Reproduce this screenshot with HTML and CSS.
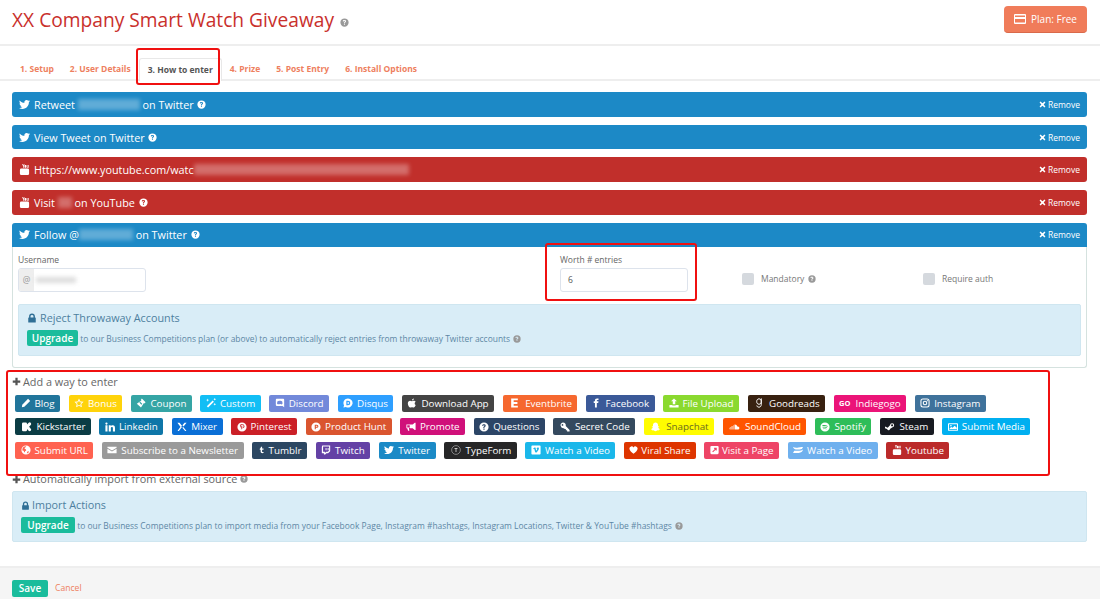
FILE: index.html
```html
<!DOCTYPE html>
<html lang="en">
<head>
    <meta charset="UTF-8">
    <title>XX Company Smart Watch Giveaway</title>
    <link rel="stylesheet" href="styles.css">
</head>
<body>
    <svg class="defs" width="0" height="0">
        <symbol id="i-twitter" viewBox="0 0 24 24"><path d="M23.95 4.57a10 10 0 0 1-2.83.8 4.93 4.93 0 0 0 2.16-2.72c-.95.55-2 .96-3.13 1.2a4.92 4.92 0 0 0-8.38 4.48C7.69 8.09 4.07 6.13 1.64 3.16a4.9 4.9 0 0 0-.67 2.47c0 1.7.87 3.2 2.19 4.1a4.9 4.9 0 0 1-2.23-.61v.06c0 2.38 1.7 4.37 3.95 4.83a5 5 0 0 1-2.21.08 4.94 4.94 0 0 0 4.6 3.42A9.87 9.87 0 0 1 0 19.54a13.94 13.94 0 0 0 7.55 2.21c9.06 0 14-7.5 14-13.98 0-.21 0-.42-.02-.63a10 10 0 0 0 2.46-2.55z"/></symbol>
        <symbol id="i-youtube" viewBox="0 0 24 24"><path d="M7 0h1.6l1 3 1-3h1.6l-1.8 5v3H8.8V5zM13 2h2a1 1 0 0 1 1 1v4a1 1 0 0 1-1 1h-2a1 1 0 0 1-1-1V3a1 1 0 0 1 1-1zM17 2h1.4v5h1.2V2H21v6h-3a1 1 0 0 1-1-1zM5 10h14a3 3 0 0 1 3 3v8a3 3 0 0 1-3 3H5a3 3 0 0 1-3-3v-8a3 3 0 0 1 3-3z"/></symbol>
        <symbol id="i-question" viewBox="0 0 24 24"><path fill-rule="evenodd" d="M12 1a11 11 0 1 1 0 22 11 11 0 0 1 0-22zm-.2 4.2c-2.6 0-4.300 1.300-4.500 3.500l2.800.4c.2-1 .8-1.500 1.600-1.500.9 0 1.500.5 1.500 1.200 0 .7-.5 1.100-1.300 1.700-1 .8-1.600 1.500-1.600 3v.6h2.700v-.4c0-.7.3-1 1.100-1.600 1.100-.8 2-1.700 2-3.400 0-2.300-1.900-3.500-4.300-3.500zM10.500 15.500v2.800h2.900v-2.800z"/></symbol>
        <symbol id="i-times" viewBox="0 0 24 24"><path d="M5 2l7 6 7-6 3 3-6 7 6 7-3 3-7-6-7 6-3-3 6-7-6-7z"/></symbol>
        <symbol id="i-card" viewBox="0 0 24 20"><path fill-rule="evenodd" d="M2 0h20a2 2 0 0 1 2 2v16a2 2 0 0 1-2 2H2a2 2 0 0 1-2-2V2a2 2 0 0 1 2-2zm0 3v3h20V3zm0 7v7h20v-7z"/></symbol>
        <symbol id="i-lock" viewBox="0 0 24 24"><path fill-rule="evenodd" d="M12 1a7 7 0 0 1 7 7v3h1a1 1 0 0 1 1 1v10a1 1 0 0 1-1 1H4a1 1 0 0 1-1-1V12a1 1 0 0 1 1-1h1V8a7 7 0 0 1 7-7zm0 3.500A3.500 3.500 0 0 0 8.500 8v3h7V8A3.500 3.500 0 0 0 12 4.500z"/></symbol>
        <symbol id="i-plus" viewBox="0 0 24 24"><path d="M9 2h6v7h7v6h-7v7H9v-7H2V9h7z"/></symbol>
        <symbol id="i-pencil" viewBox="0 0 24 24"><path d="M17 2l5 5L8 21l-6 1 1-6z"/></symbol>
        <symbol id="i-star" viewBox="0 0 24 24"><path fill-rule="evenodd" d="M12 1l3.400 7.200 7.600 1-5.500 5.400 1.400 7.800L12 18.600l-6.900 3.800 1.400-7.800L1 9.200l7.600-1zm0 5l-2 4.300-4.600.6 3.300 3.200-.8 4.600 4.100-2.200 4.100 2.200-.8-4.600 3.300-3.200-4.600-.6z"/></symbol>
        <symbol id="i-ticket" viewBox="0 0 24 24"><path d="M14 1l9 9-3 3-1-1-7 11-10-9L13 6l-1-2zM10 9l-2 2 5 5 2-2z"/></symbol>
        <symbol id="i-magic" viewBox="0 0 24 24"><path d="M16 6l3 3L5 23l-3-3zM4 1l1 3 3 1-3 1-1 3-1-3-3-1 3-1zM21 0l1 2 2 1-2 1-1 2-1-2-2-1 2-1zM21 12l1 2 2 1-2 1-1 2-1-2-2-1 2-1z"/></symbol>
        <symbol id="i-discord" viewBox="0 0 24 24"><path fill-rule="evenodd" d="M4 2h16a2 2 0 0 1 2 2v18l-4-3H4a2 2 0 0 1-2-2V4a2 2 0 0 1 2-2zm4 5c-1.500.3-2 1-2 1-.8 2-1 4-1 6 1 1 2.200 1.400 3 1.500l1-1.300c1 .3 2.500.5 2 .5s2 0 3-.5l1 1.300c.8-.1 2-.5 3-1.500 0-2-.2-4-1-6 0 0-.5-.7-2-1-2-.5-5-.5-7 0z"/></symbol>
        <symbol id="i-disqus" viewBox="0 0 24 24"><path fill-rule="evenodd" d="M12 1a11 11 0 1 1-5 20.800L1 23l1.500-5.500A11 11 0 0 1 12 1zM8 6.500v11h4a5.500 5.500 0 0 0 0-11zm3 3h1a2.500 2.500 0 0 1 0 5h-1z"/></symbol>
        <symbol id="i-apple" viewBox="0 0 24 24"><path d="M16.500 1c.2 2.600-2.300 5-4.700 4.800C11.500 3.400 14 1.100 16.500 1zM21 17c-1 2.500-3 6-5 6-1.500 0-2-1-3.900-1s-2.500 1-4 1C5 23 2 17 2 13c0-4 2.600-6.500 5.300-6.500 1.800 0 3.300 1.100 4.500 1.100 1.100 0 2.800-1.300 4.800-1.100 1 0 3 .4 4.200 2.200-3.500 2.200-3 7 .2 8.300z"/></symbol>
        <symbol id="i-e" viewBox="0 0 24 24"><path d="M4 1h16v4.500H10v4.200h9v4.600h-9v4.200h10V23H4z"/></symbol>
        <symbol id="i-facebook" viewBox="0 0 24 24"><path d="M14 8V6c0-1 .5-1.500 1.500-1.500H18V1h-3.500C11 1 9.500 3 9.500 6v2H6.500v4h3v11H14V12h3.300l.6-4z"/></symbol>
        <symbol id="i-upload" viewBox="0 0 24 24"><path d="M12 1l7 7h-4v7H9V8H5zM1 17h7v1h8v-1h7v6H1z"/></symbol>
        <symbol id="i-g" viewBox="0 0 24 24"><path fill="none" stroke="currentColor" stroke-width="2.400" d="M12 2c-3.500 0-5.500 2.800-5.500 6.500s2 6.500 5.500 6.500 5.500-2.800 5.500-6.500S15.500 2 12 2zM17.500 1v14c0 4.500-2 7-5.500 7-3 0-5-1.500-5.300-4"/></symbol>
        <symbol id="i-instagram" viewBox="0 0 24 24"><path fill-rule="evenodd" d="M7 1h10a6 6 0 0 1 6 6v10a6 6 0 0 1-6 6H7a6 6 0 0 1-6-6V7a6 6 0 0 1 6-6zm0 2.500A3.500 3.500 0 0 0 3.500 7v10A3.500 3.500 0 0 0 7 20.500h10a3.500 3.500 0 0 0 3.500-3.500V7A3.500 3.500 0 0 0 17 3.500zM12 6.500a5.500 5.500 0 1 1 0 11 5.500 5.500 0 0 1 0-11zM12 9a3 3 0 1 0 0 6 3 3 0 0 0 0-6zM17.700 5a1.300 1.300 0 1 1 0 2.600 1.300 1.300 0 0 1 0-2.600z"/></symbol>
        <symbol id="i-kick" viewBox="0 0 24 24"><path d="M3 1h6a3 3 0 0 1 3 3v2l4-4a3.500 3.500 0 0 1 6 2.500c0 1-.4 1.800-1 2.500l-4 4.500 4 4.500c.6.700 1 1.500 1 2.500a3.500 3.500 0 0 1-6 2.500l-4-4v2a3 3 0 0 1-3 3H3a3 3 0 0 1-3-3V4a3 3 0 0 1 3-3z"/></symbol>
        <symbol id="i-linkedin" viewBox="0 0 24 24"><path d="M1 8h5v15H1zM3.500 1a2.700 2.700 0 1 1 0 5.400 2.700 2.700 0 0 1 0-5.400zM9 8h4.800v2c.8-1.300 2.400-2.400 4.700-2.400 4.300 0 5.500 2.800 5.500 7V23h-5v-7.500c0-2-.5-3.400-2.300-3.400-2 0-2.700 1.500-2.700 3.400V23H9z"/></symbol>
        <symbol id="i-mixer" viewBox="0 0 24 24"><path d="M1 2h5l6 7-3 3.500zM23 2h-5l-5 5.800 2.800 3.200zM12 12l-7 9c-.6.900-2.600.7-3.500-.2L9 11zM15 12l7.500 8.800c-.9.900-2.900 1.100-3.500.2l-6.300-7.200z"/></symbol>
        <symbol id="i-pinterest" viewBox="0 0 24 24"><path fill-rule="evenodd" d="M12 1a11 11 0 1 1 0 22 11 11 0 0 1 0-22zm.4 4C9 5 7 7.300 7 9.800c0 1.200.6 2.600 1.600 3.100.3.100.4 0 .5-.6.100-.4 0-.5-.2-.9-1-1.800.3-4.700 3.300-4.700 2.200 0 3.500 1.300 3.500 3.200 0 2.400-1 4-2.400 4-.8 0-1.400-.6-1.200-1.500.2-1 .7-2 .7-2.700 0-1.600-2.500-1.400-2.500 1 0 .7.200 1.200.2 1.200l-1 4.300c-.2 1 0 2.400 0 2.500.6-.6 1.200-1.700 1.500-2.600l.5-2c.3.500 1.100 1 2 1 2.600 0 4.500-2.400 4.500-5.500C17 6.900 15 5 12.400 5z"/></symbol>
        <symbol id="i-producthunt" viewBox="0 0 24 24"><path fill-rule="evenodd" d="M12 1a11 11 0 1 1 0 22 11 11 0 0 1 0-22zM9 6.500v11h2.500V14H14a3.750 3.750 0 0 0 0-7.500zM11.500 9H14a1.250 1.250 0 0 1 0 2.500h-2.500z"/></symbol>
        <symbol id="i-bullhorn" viewBox="0 0 24 24"><path d="M23 2v17h-2l-5-4H9v-1l-2 .5L8 21H5l-2-6H1V6h15l5-4zM9 8H3v5h6z"/></symbol>
        <symbol id="i-key" viewBox="0 0 24 24"><path fill-rule="evenodd" d="M7 1a7 7 0 0 1 6.800 8.800L23 19v4h-6v-3h-3v-3h-3l-1.300-2.200A7 7 0 1 1 7 1zM6 5a2 2 0 1 0 0 4 2 2 0 0 0 0-4z"/></symbol>
        <symbol id="i-snapchat" viewBox="0 0 24 24"><path d="M12 1c3.600 0 6 2.700 6 6v3.500l2-.5c.9 0 1.300 1 .5 1.500l-2 1c.5 2 2.200 3.800 4 4.500.6.300.4 1-.5 1.200l-2 .5-.5 1.500-2.500-.2c-1.600.3-2.700 2-5 2s-3.400-1.700-5-2l-2.500.2-.5-1.500-2-.5c-.9-.2-1.100-.9-.5-1.200 1.800-.7 3.500-2.500 4-4.500l-2-1c-.8-.5-.4-1.500.5-1.500l2 .5V7c0-3.300 2.400-6 6-6z"/></symbol>
        <symbol id="i-soundcloud" viewBox="0 0 24 24"><path d="M13 6a6 6 0 0 1 5.800 4.500H20a3.500 3.500 0 0 1 0 7.500H12V6.500c.3-.3.600-.5 1-.5zM9.500 8h1.200v10H9.500zM7 9.500h1.200V18H7zM4.500 10h1.200v8H4.500zM2 12h1.200v6H2zM0 13.500h1v4H0z"/></symbol>
        <symbol id="i-spotify" viewBox="0 0 24 24"><path fill-rule="evenodd" d="M12 1a11 11 0 1 1 0 22 11 11 0 0 1 0-22zM5.500 8v2.200c4-1 9-.7 13 1.300V9.300C14.500 7.300 9.500 7 5.500 8zm1 4v1.900c3.500-.8 7.500-.5 10.500 1v-1.800C14 11.600 10 11.300 6.500 12zm1 3.600v1.600c2.700-.6 5.800-.4 8 .8v-1.500c-2.300-1.200-5.300-1.500-8-.9z"/></symbol>
        <symbol id="i-steam" viewBox="0 0 24 24"><path fill-rule="evenodd" d="M17 3a5 5 0 1 1 0 10l-5 3.500a3.700 3.700 0 0 1-7.200.5L0 15v-4l6.500 2.500L12 7.500A5 5 0 0 1 17 3zm0 2.500a2.500 2.500 0 1 0 0 5 2.500 2.500 0 0 0 0-5z"/></symbol>
        <symbol id="i-image" viewBox="0 0 24 24"><path fill-rule="evenodd" d="M2 3h20a2 2 0 0 1 2 2v14a2 2 0 0 1-2 2H2a2 2 0 0 1-2-2V5a2 2 0 0 1 2-2zm.5 2.500v13h19v-13zM7 7a2 2 0 1 1 0 4 2 2 0 0 1 0-4zM4 17v-2l4-3 3 2 5-5 5 5v3z"/></symbol>
        <symbol id="i-globe" viewBox="0 0 24 24"><path fill-rule="evenodd" d="M12 1a11 11 0 1 1 0 22 11 11 0 0 1 0-22zM6 5C4 7 3 10 3.500 13l3 1 1 3 2 1v-3l3-2-1-3-3-1 1-3 3-1-1-2c-2 0-4 1-5.500 2zm11 10l-2 1-1 4c2.500-.5 4.500-2 5.500-4z"/></symbol>
        <symbol id="i-envelope" viewBox="0 0 24 24"><path d="M1 4h22v2.500L12 13 1 6.500zM1 9l11 6.500L23 9v11H1z"/></symbol>
        <symbol id="i-tumblr" viewBox="0 0 24 24"><path d="M10 1h4v6h5v4h-5v6.500c0 1.500 1.500 2.200 5 1.500v3.500c-6 1.300-10-.5-10-4.500V11H6V8c2.500-1 3.700-3.500 4-7z"/></symbol>
        <symbol id="i-twitch" viewBox="0 0 24 24"><path fill-rule="evenodd" d="M3 1h19v14l-5 5h-4l-3 3H7v-3H2V5zm2 2.500V16h4.500v3l3-3h4l3-3V3.500zM11 7h2.200v5.500H11zm5 0h2.200v5.500H16z"/></symbol>
        <symbol id="i-typeform" viewBox="0 0 24 24"><circle cx="12" cy="12" r="10.500" fill="none" stroke="currentColor" stroke-width="1"/><path d="M8.500 8h7v1.600h-2.700V17h-1.600V9.600H8.500z"/></symbol>
        <symbol id="i-vimeo" viewBox="0 0 24 24"><path fill-rule="evenodd" d="M3 1h18a2 2 0 0 1 2 2v18a2 2 0 0 1-2 2H3a2 2 0 0 1-2-2V3a2 2 0 0 1 2-2zm2 8l1 1.200c1-.7 1.500-.8 2-.2.600 1 1.500 6 2.500 7.500 1 1.300 2.300.7 4-1 2-2 4.500-5.500 4.500-8 0-2.500-1.500-3-3-2.500-1.500.5-2.500 2-3 3.500 1.500-.5 2-.2 1.500 1-.3 1-1.200 2.500-1.800 2.500-1 0-1-5-2.200-6.800C9.500 5 8 6 5 9z"/></symbol>
        <symbol id="i-heart" viewBox="0 0 24 24"><path d="M12 22C6 17 1 13 1 8a6 6 0 0 1 11-3 6 6 0 0 1 11 3c0 5-5 9-11 14z"/></symbol>
        <symbol id="i-external" viewBox="0 0 24 24"><path fill-rule="evenodd" d="M4 1h16a3 3 0 0 1 3 3v16a3 3 0 0 1-3 3H4a3 3 0 0 1-3-3V4a3 3 0 0 1 3-3zm7 5v3h2L6 16l2 2 7-7v2h3V6z"/></symbol>
        <symbol id="i-wistia" viewBox="0 0 24 24"><path d="M0 5c4 2 9 2 13 1s8-2 11-1c-1 4-4 6-8 6H7C4 11 1 8 0 5zM3 14h12c3 0 6-1 9-3-1 5-5 8-10 8H0z"/></symbol>
    </svg>

    <header class="top">
        <h1>XX Company Smart Watch Giveaway <svg class="ico h1-help"><use href="#i-question"/></svg></h1>
        <a class="plan-btn"><svg class="ico"><use href="#i-card"/></svg>Plan: Free</a>
    </header>

    <nav class="tabs">
        <a>1. Setup</a>
        <a>2. User Details</a>
        <a class="active">3. How to enter</a>
        <a>4. Prize</a>
        <a>5. Post Entry</a>
        <a>6. Install Options</a>
    </nav>

    <main class="content">
        <div class="bar twitter">
            <span class="bar-title"><svg class="ico"><use href="#i-twitter"/></svg>Retweet <i class="smudge w-62"></i> on Twitter <svg class="ico help"><use href="#i-question"/></svg></span>
            <a class="remove"><svg class="ico"><use href="#i-times"/></svg>Remove</a>
        </div>
        <div class="bar twitter">
            <span class="bar-title"><svg class="ico"><use href="#i-twitter"/></svg>View Tweet on Twitter <svg class="ico help"><use href="#i-question"/></svg></span>
            <a class="remove"><svg class="ico"><use href="#i-times"/></svg>Remove</a>
        </div>
        <div class="bar youtube">
            <span class="bar-title"><svg class="ico"><use href="#i-youtube"/></svg>Https://www.youtube.com/watc<i class="smudge w-215"></i></span>
            <a class="remove"><svg class="ico"><use href="#i-times"/></svg>Remove</a>
        </div>
        <div class="bar youtube">
            <span class="bar-title"><svg class="ico"><use href="#i-youtube"/></svg>Visit <i class="smudge w-14"></i> on YouTube <svg class="ico help"><use href="#i-question"/></svg></span>
            <a class="remove"><svg class="ico"><use href="#i-times"/></svg>Remove</a>
        </div>

        <section class="panel">
            <div class="bar twitter open">
                <span class="bar-title"><svg class="ico"><use href="#i-twitter"/></svg>Follow @<i class="smudge w-54"></i> on Twitter <svg class="ico help"><use href="#i-question"/></svg></span>
                <a class="remove"><svg class="ico"><use href="#i-times"/></svg>Remove</a>
            </div>
            <div class="panel-body">
                <div class="form-row">
                    <div class="field">
                        <label>Username</label>
                        <div class="input user-input"><span class="addon">@</span><i class="smudge-light"></i></div>
                    </div>
                    <div class="field">
                        <label>Worth # entries</label>
                        <div class="input">6</div>
                    </div>
                    <div class="check"><span class="box"></span>Mandatory <svg class="ico grey-help"><use href="#i-question"/></svg></div>
                    <div class="check"><span class="box"></span>Require auth</div>
                </div>
                <div class="notice">
                    <h4><svg class="ico"><use href="#i-lock"/></svg>Reject Throwaway Accounts</h4>
                    <p><a class="upgrade">Upgrade</a> to our Business Competitions plan (or above) to automatically reject entries from throwaway Twitter accounts <svg class="ico grey-help"><use href="#i-question"/></svg></p>
                </div>
            </div>
        </section>

        <h3 class="add-title"><svg class="ico"><use href="#i-plus"/></svg>Add a way to enter</h3>
        <div class="chips">
            <a class="chip c-blog"><svg class="ico"><use href="#i-pencil"/></svg>Blog</a>
            <a class="chip c-bonus"><svg class="ico"><use href="#i-star"/></svg>Bonus</a>
            <a class="chip c-coupon"><svg class="ico"><use href="#i-ticket"/></svg>Coupon</a>
            <a class="chip c-custom"><svg class="ico"><use href="#i-magic"/></svg>Custom</a>
            <a class="chip c-discord"><svg class="ico"><use href="#i-discord"/></svg>Discord</a>
            <a class="chip c-disqus"><svg class="ico"><use href="#i-disqus"/></svg>Disqus</a>
            <a class="chip c-apple"><svg class="ico"><use href="#i-apple"/></svg>Download App</a>
            <a class="chip c-eventbrite"><svg class="ico"><use href="#i-e"/></svg>Eventbrite</a>
            <a class="chip c-facebook"><svg class="ico"><use href="#i-facebook"/></svg>Facebook</a>
            <a class="chip c-upload"><svg class="ico"><use href="#i-upload"/></svg>File Upload</a>
            <a class="chip c-goodreads"><svg class="ico"><use href="#i-g"/></svg>Goodreads</a>
            <a class="chip c-indiegogo"><b>GO</b>Indiegogo</a>
            <a class="chip c-instagram"><svg class="ico"><use href="#i-instagram"/></svg>Instagram</a>
        </div>
        <div class="chips">
            <a class="chip c-kick"><svg class="ico"><use href="#i-kick"/></svg>Kickstarter</a>
            <a class="chip c-linkedin"><svg class="ico"><use href="#i-linkedin"/></svg>Linkedin</a>
            <a class="chip c-mixer"><svg class="ico"><use href="#i-mixer"/></svg>Mixer</a>
            <a class="chip c-pinterest"><svg class="ico"><use href="#i-pinterest"/></svg>Pinterest</a>
            <a class="chip c-ph"><svg class="ico"><use href="#i-producthunt"/></svg>Product Hunt</a>
            <a class="chip c-promote"><svg class="ico"><use href="#i-bullhorn"/></svg>Promote</a>
            <a class="chip c-questions"><svg class="ico"><use href="#i-question"/></svg>Questions</a>
            <a class="chip c-secret"><svg class="ico"><use href="#i-key"/></svg>Secret Code</a>
            <a class="chip c-snapchat"><svg class="ico"><use href="#i-snapchat"/></svg>Snapchat</a>
            <a class="chip c-soundcloud"><svg class="ico"><use href="#i-soundcloud"/></svg>SoundCloud</a>
            <a class="chip c-spotify"><svg class="ico"><use href="#i-spotify"/></svg>Spotify</a>
            <a class="chip c-steam"><svg class="ico"><use href="#i-steam"/></svg>Steam</a>
            <a class="chip c-media"><svg class="ico"><use href="#i-image"/></svg>Submit Media</a>
        </div>
        <div class="chips">
            <a class="chip c-url"><svg class="ico"><use href="#i-globe"/></svg>Submit URL</a>
            <a class="chip c-news"><svg class="ico"><use href="#i-envelope"/></svg>Subscribe to a Newsletter</a>
            <a class="chip c-tumblr"><svg class="ico"><use href="#i-tumblr"/></svg>Tumblr</a>
            <a class="chip c-twitch"><svg class="ico"><use href="#i-twitch"/></svg>Twitch</a>
            <a class="chip c-twitter"><svg class="ico"><use href="#i-twitter"/></svg>Twitter</a>
            <a class="chip c-typeform"><svg class="ico"><use href="#i-typeform"/></svg>TypeForm</a>
            <a class="chip c-vimeo"><svg class="ico"><use href="#i-vimeo"/></svg>Watch a Video</a>
            <a class="chip c-viral"><svg class="ico"><use href="#i-heart"/></svg>Viral Share</a>
            <a class="chip c-visit"><svg class="ico"><use href="#i-external"/></svg>Visit a Page</a>
            <a class="chip c-wistia"><svg class="ico"><use href="#i-wistia"/></svg>Watch a Video</a>
            <a class="chip c-youtube"><svg class="ico"><use href="#i-youtube"/></svg>Youtube</a>
        </div>

        <h3 class="import-title"><svg class="ico"><use href="#i-plus"/></svg>Automatically import from external source <svg class="ico grey-help"><use href="#i-question"/></svg></h3>
        <div class="notice wide">
            <h4><svg class="ico"><use href="#i-lock"/></svg>Import Actions</h4>
            <p><a class="upgrade">Upgrade</a> to our Business Competitions plan to import media from your Facebook Page, Instagram #hashtags, Instagram Locations, Twitter &amp; YouTube #hashtags <svg class="ico grey-help"><use href="#i-question"/></svg></p>
        </div>
    </main>

    <footer class="bottom">
        <a class="save">Save</a>
        <a class="cancel">Cancel</a>
    </footer>

    <div class="mark mark-tab"></div>
    <div class="mark mark-worth"></div>
    <div class="mark mark-add"></div>
</body>
</html>
```

FILE: styles.css
```css
html, body {
    margin: 0;
    height: 599px;
    overflow: hidden;
}
body {
    position: relative;
    font-family: 'Open Sans', sans-serif;
    background-color: #ffffff;
    color: #666;
}
a {
    text-decoration: none;
}
.defs {
    position: absolute;
}
.ico {
    width: 1em;
    height: 1em;
    fill: currentColor;
    flex: none;
}

/* header */
.top {
    height: 44px;
    display: flex;
    justify-content: space-between;
    align-items: flex-start;
    padding: 0 13px 0 12px;
    border-bottom: 2px solid #eeeeee;
    box-sizing: content-box;
}
h1 {
    margin: 6px 0 0 0;
    font-size: 19.2px;
    line-height: 28px;
    font-weight: 400;
    color: #c9302c;
    white-space: nowrap;
}
.h1-help {
    width: 9px;
    height: 9px;
    color: #999;
    margin-left: 1px;
}
.plan-btn {
    display: flex;
    align-items: center;
    justify-content: center;
    width: 83px;
    height: 27px;
    margin-top: 6px;
    background-color: #f07c5a;
    border-bottom: 1px solid #d9694a;
    border-radius: 4px;
    color: #fff;
    font-size: 10px;
    box-sizing: border-box;
}
.plan-btn .ico {
    width: 12px;
    height: 10px;
    margin-right: 5px;
}

/* tabs */
.tabs {
    height: 33px;
    display: flex;
    align-items: flex-end;
    padding-left: 12px;
    border-bottom: 2px solid #eeeeee;
    font-size: 8.5px;
    font-weight: 700;
    color: #ee7f60;
}
.tabs a {
    padding: 0 8px;
    line-height: 20px;
    white-space: nowrap;
}
.tabs .active {
    color: #555;
    background: #fff;
    border: 1px solid #e8e8e8;
    border-bottom: none;
    border-radius: 3px 3px 0 0;
    margin: 0 0 -2px 0;
    line-height: 22px;
}

.content {
    padding: 11px 13px 0 12px;
    height: 485px;
    box-sizing: border-box;
}

/* entry bars */
.bar {
    height: 24.7px;
    display: flex;
    justify-content: space-between;
    align-items: center;
    padding: 0 7px;
    margin-bottom: 8px;
    border-radius: 3px;
    color: #fff;
    box-sizing: border-box;
}
.bar.twitter {
    background-color: #1c89c6;
}
.bar.youtube {
    background-color: #c12f2b;
}
.bar.open {
    margin-bottom: 0;
    height: 24px;
    border-radius: 3px 3px 0 0;
}
.bar-title {
    display: flex;
    align-items: center;
    font-size: 10.8px;
    white-space: pre;
}
.bar-title .ico {
    width: 11px;
    height: 11px;
    margin-right: 4px;
}
.bar-title .help {
    width: 9px;
    height: 9px;
    margin: 0 0 0 1px;
}
.remove {
    display: flex;
    align-items: center;
    font-size: 8.5px;
    color: #fff;
}
.remove .ico {
    width: 7px;
    height: 7px;
    margin-right: 2px;
}
.smudge {
    display: inline-block;
    height: 11px;
    background: rgba(255, 255, 255, 0.3);
    filter: blur(2px);
}
.w-14 { width: 14px; }
.w-54 { width: 54px; }
.w-62 { width: 62px; }
.w-215 { width: 215px; }

/* open panel */
.panel {
    border: 1px solid #d5e2df;
    border-top: none;
    border-radius: 3px;
    height: 145px;
    box-sizing: border-box;
    margin-bottom: 7px;
}
.panel .bar {
    margin: 0 -1px;
}
.panel-body {
    padding: 7px 5px 0 5px;
}
.form-row {
    display: grid;
    grid-template-columns: 542px 182px 181px auto;
    height: 46px;
    margin-bottom: 4px;
}
.field label {
    display: block;
    font-size: 8.5px;
    color: #666;
    line-height: 12px;
    margin: 0 0 2px 0;
}
.input {
    width: 128px;
    height: 24px;
    border: 1px solid #dde3ec;
    border-radius: 3px;
    box-sizing: border-box;
    display: flex;
    align-items: center;
    padding-left: 7px;
    font-size: 8.5px;
    color: #555;
    background: #fff;
}
.user-input {
    padding-left: 0;
    overflow: hidden;
}
.addon {
    width: 15px;
    height: 100%;
    background: #eee;
    color: #999;
    display: flex;
    align-items: center;
    justify-content: center;
}
.smudge-light {
    display: block;
    width: 40px;
    height: 6px;
    margin-left: 2px;
    background: #ddd;
    filter: blur(2px);
}
.check {
    display: flex;
    align-items: center;
    font-size: 8.5px;
    color: #777;
    padding-top: 10px;
    height: 30px;
    white-space: pre;
}
.box {
    width: 12px;
    height: 12px;
    background: #d5d9de;
    border-radius: 2px;
    margin-right: 7px;
}
.grey-help {
    width: 8px;
    height: 8px;
    color: #999;
    margin-left: 1px;
    vertical-align: -1px;
}

/* blue notices */
.notice {
    background-color: #d9edf7;
    border: 1px solid #cfe6f0;
    border-radius: 2px;
    height: 52px;
    box-sizing: border-box;
    padding: 6px 8px;
}
.notice h4 {
    margin: 0 0 5px 0;
    font-size: 10.8px;
    font-weight: 400;
    line-height: 14px;
    color: #4d7f9f;
    display: flex;
    align-items: center;
}
.notice h4 .ico {
    width: 10px;
    height: 10px;
    margin-right: 3px;
    color: #2f6f96;
}
.notice p {
    margin: 0;
    font-size: 8.45px;
    line-height: 16px;
    color: #5d87a5;
    white-space: nowrap;
}
.upgrade {
    display: inline-block;
    width: 51px;
    height: 16px;
    line-height: 16px;
    text-align: center;
    background-color: #1abc9c;
    border-radius: 2px;
    color: #fff;
    font-size: 10px;
    font-weight: 600;
}
.wide {
    height: 51px;
}
.wide h4 .ico {
    width: 9px;
    height: 9px;
    margin-right: 2px;
}
.wide .upgrade {
    width: 54px;
}

h3 {
    margin: 0;
    font-size: 10.85px;
    font-weight: 400;
    color: #666;
    display: flex;
    align-items: center;
}
h3 .ico:first-child {
    width: 9px;
    height: 9px;
    margin-right: 2px;
    color: #555;
}
h3 .grey-help {
    margin-left: 3px;
}
.add-title {
    line-height: 14px;
    margin-bottom: 6px;
}
.import-title {
    line-height: 14px;
    margin: 13.5px 0 5px 0;
}

/* chips */
.chips {
    display: flex;
    gap: 8.5px;
    padding-left: 3px;
    margin-bottom: 6.5px;
}
.chip {
    height: 17px;
    display: flex;
    align-items: center;
    padding: 0 5.5px;
    border-radius: 2px;
    color: #fff;
    font-size: 9.8px;
    white-space: nowrap;
    box-sizing: border-box;
}
.chip .ico {
    width: 10px;
    height: 10px;
    margin-right: 4px;
}
.chip b {
    font-size: 7.5px;
    margin-right: 5px;
}
.c-kick .ico, .c-goodreads .ico, .c-secret .ico, .c-typeform .ico { width: 12px; }
.c-soundcloud .ico, .c-snapchat .ico, .c-eventbrite .ico { width: 13px; }
.c-tumblr .ico { width: 7px; }
.c-viral .ico, .c-visit .ico { width: 9px; margin-right: 3px; }
.c-blog { background: #21759b; }
.c-bonus { background: #ffd30a; }
.c-coupon { background: #35a5a5; }
.c-custom { background: #12bef5; }
.c-discord { background: #7289da; }
.c-disqus { background: #2e9fff; }
.c-apple { background: #444444; }
.c-eventbrite { background: #f6682f; }
.c-facebook { background: #3b5998; }
.c-upload { background: #8ad92f; }
.c-goodreads { background: #382110; }
.c-indiegogo { background: #eb1478; }
.c-instagram { background: #3f729b; }
.c-kick { background: #0b3c44; }
.c-linkedin { background: #0e76a8; }
.c-mixer { background: #0a6fd6; }
.c-pinterest { background: #cb2027; }
.c-ph { background: #da552f; }
.c-promote { background: #d0107a; }
.c-questions { background: #2c4566; }
.c-secret { background: #34495e; }
.c-snapchat { background: #fffc00; color: #6a6a20; }
.c-snapchat .ico { color: #fff; }
.c-soundcloud { background: #ff5500; }
.c-spotify { background: #2ebd59; }
.c-steam { background: #171a21; }
.c-media { background: #00aff0; }
.c-url { background: #ff6250; }
.c-news { background: #9a9a9a; }
.c-tumblr { background: #2c4762; }
.c-twitch { background: #6441a5; }
.c-twitter { background: #1b8ac6; }
.c-typeform { background: #262627; }
.c-vimeo { background: #1ab7ea; }
.c-viral { background: #de3500; }
.c-visit { background: #ee4466; }
.c-wistia { background: #6fb0ee; }
.c-youtube { background: #bb2a2a; }

/* footer */
.bottom {
    height: 33px;
    box-sizing: border-box;
    background: #f5f5f5;
    border-top: 2px solid #eeeeee;
    display: flex;
    align-items: center;
    padding: 9px 12px 0 12px;
}
.save {
    width: 36px;
    height: 17px;
    line-height: 17px;
    text-align: center;
    background: #1abc9c;
    border-radius: 2px;
    color: #fff;
    font-size: 10px;
    font-weight: 600;
}
.cancel {
    margin-left: 7px;
    font-size: 8.6px;
    color: #ee7f60;
}

/* red annotation boxes drawn over the screenshot */
.mark {
    position: absolute;
    border: 2px solid #f01010;
    border-radius: 3px;
    box-sizing: border-box;
}
.mark-tab {
    left: 136px;
    top: 48px;
    width: 84px;
    height: 37px;
}
.mark-worth {
    left: 545px;
    top: 243px;
    width: 152px;
    height: 58px;
}
.mark-add {
    left: 6px;
    top: 370px;
    width: 1044px;
    height: 106px;
}
```
